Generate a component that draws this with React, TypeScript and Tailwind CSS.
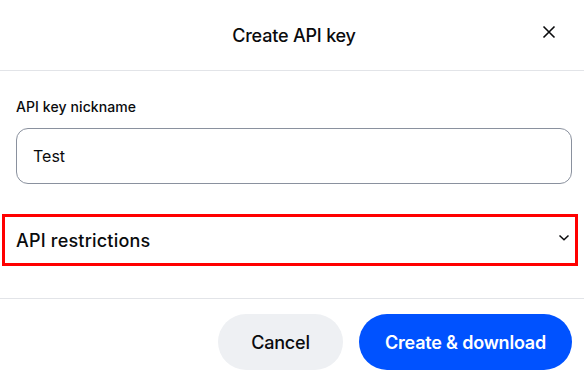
import React from 'react';

export default function App() {
  return (
    <div className="w-[584px] h-[384px] overflow-hidden bg-white" style={{ fontFamily: 'Inter, "Noto Sans", sans-serif' }}>
      <div className="w-[588px] text-[#0a0b0d]">
        <div className="relative h-[71px] border-b border-[#e2e4e8] flex items-center justify-center">
          <h2 className="text-[18px] font-medium tracking-[-0.2px]">Create API key</h2>
          <button className="absolute left-[537px] top-[20px] w-6 h-6 flex items-center justify-center">
            <svg width="14" height="14" viewBox="0 0 14 14" fill="none" stroke="#0a0b0d" strokeWidth="1.6">
              <path d="M1.5 1.5l11 11M12.5 1.5l-11 11" />
            </svg>
          </button>
        </div>

        <div className="px-4 pt-[26px]">
          <label className="block text-[14px] font-medium leading-[20px] tracking-[0.1px]">API key nickname</label>
          <div className="mt-[11px] h-[56px] rounded-[12px] border border-[#8a919e] flex items-center px-4">
            <span className="text-[16px]">Test</span>
          </div>
        </div>

        <div className="mt-[30px] ml-[2px] w-[576px] h-[52px] border-[3px] border-[#ff0000] flex items-center justify-between pl-[11px] pr-[5px]">
          <span className="text-[18px] font-medium tracking-[0.2px]">API restrictions</span>
          <svg width="12" height="7" viewBox="0 0 12 7" fill="none" stroke="#0a0b0d" strokeWidth="1.5" className="mt-[-6px]">
            <path d="M1.5 1.5l4.5 4.2 4.5-4.2" />
          </svg>
        </div>

        <div className="mt-[32px] border-t border-[#e2e4e8] flex justify-end gap-4 pt-[15px] pr-4">
          <button className="h-[56px] w-[125px] rounded-full bg-[#eef0f3] text-[18px] font-medium tracking-[-0.2px]">Cancel</button>
          <button className="h-[56px] w-[213px] rounded-full bg-[#0052ff] text-white text-[18px] font-semibold tracking-[-0.2px]">Create &amp; download</button>
        </div>
      </div>
    </div>
  );
}
